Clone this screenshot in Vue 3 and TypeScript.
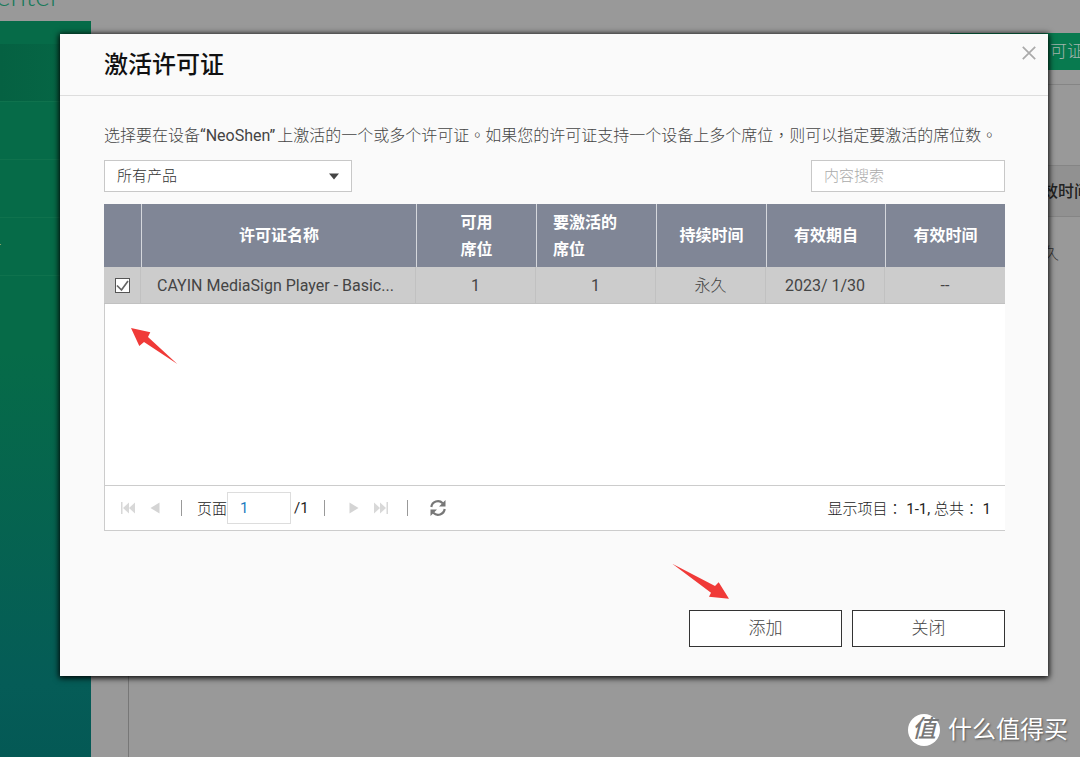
<script setup lang="ts">
import { ref } from 'vue'

interface License {
  id: number
  name: string
  available: string
  activate: string
  duration: string
  from: string
  expires: string
  selected: boolean
}

const licenses = ref<License[]>([
  {
    id: 1,
    name: 'CAYIN MediaSign Player - Basic...',
    available: '1',
    activate: '1',
    duration: '永久',
    from: '2023/ 1/30',
    expires: '--',
    selected: true,
  },
])

const product = ref('all')
const keyword = ref('')
const page = ref('1')
const open = ref(true)
const navItems = ['', '', '', '-']
</script>

<template>
  <div class="page">
    <header class="topbar"><span class="brand">enter</span></header>
    <div class="shell">
      <nav class="sidebar">
        <ul>
          <li v-for="(item, i) in navItems" :key="i" :class="{ active: i === 0 }">{{ item }}</li>
        </ul>
      </nav>
      <main class="content">
        <div class="toolbar"><button class="green" type="button">可证</button></div>
        <section class="panel">
          <div class="panel-head">效时间</div>
          <div class="panel-row">久</div>
        </section>
      </main>
    </div>

    <div v-if="open" class="overlay">
      <div class="dialog" role="dialog" aria-labelledby="dialog-title">
        <div class="dialog-head">
          <h1 id="dialog-title">激活许可证</h1>
          <button class="close" type="button" aria-label="关闭" @click="open = false">
            <svg width="14" height="14" viewBox="0 0 14 14">
              <path d="M.8 .8 13.2 13.2M13.2 .8 .8 13.2" fill="none" stroke="#aaa" stroke-width="1.7" />
            </svg>
          </button>
        </div>

        <div class="dialog-body">
          <p class="intro">
            选择要在设备<span class="device">“NeoShen”</span>上激活的一个或多个许可证<span class="mid">。</span>如果您的许可证支持一个设备上多个席位<span class="mid">，</span>则可以指定要激活的席位数<span class="mid">。</span>
          </p>

          <div class="filters">
            <div class="select-box">
              <select v-model="product" aria-label="产品">
                <option value="all">所有产品</option>
              </select>
              <svg width="10" height="7" viewBox="0 0 10 7"><path d="M0 .5h10L5 6.5z" fill="#444" /></svg>
            </div>
            <input v-model="keyword" class="search" type="text" placeholder="内容搜索" aria-label="内容搜索" />
          </div>

          <div class="grid-box">
            <div class="rows">
              <table>
                <colgroup>
                  <col class="c-check" />
                  <col />
                  <col class="c-wide" />
                  <col class="c-wide" />
                  <col class="c-mid" />
                  <col class="c-from" />
                  <col class="c-wide" />
                </colgroup>
                <thead>
                  <tr>
                    <th></th>
                    <th>许可证名称</th>
                    <th>可用<br />席位</th>
                    <th class="left">要激活的<br />席位</th>
                    <th>持续时间</th>
                    <th>有效期自</th>
                    <th>有效时间</th>
                  </tr>
                </thead>
                <tbody>
                  <tr v-for="row in licenses" :key="row.id">
                    <td><input v-model="row.selected" type="checkbox" :aria-label="row.name" /></td>
                    <td class="left">{{ row.name }}</td>
                    <td>{{ row.available }}</td>
                    <td>{{ row.activate }}</td>
                    <td>{{ row.duration }}</td>
                    <td>{{ row.from }}</td>
                    <td>{{ row.expires }}</td>
                  </tr>
                </tbody>
              </table>
              <svg class="arrow arrow-row" width="48" height="38" viewBox="0 0 48 38">
                <path d="M1 1 20.300 5.300 18 10 47.300 37 14 15 9.300 19z" fill="#f03a38" />
              </svg>
            </div>

            <div class="pager">
              <div class="pager-nav">
                <button type="button" aria-label="第一页" disabled>
                  <svg width="16" height="14" viewBox="0 0 16 14">
                    <path d="M1 1h1.500v12H1zM9 1.500v11L3 7zM15 1.500v11L9 7z" fill="#d8d8d8" />
                  </svg>
                </button>
                <button type="button" aria-label="上一页" disabled>
                  <svg width="16" height="14" viewBox="0 0 16 14"><path d="M12.500 1.500v11L3.500 7z" fill="#d4d4d4" /></svg>
                </button>
                <i class="bar"></i>
                <label class="page-label" for="page-input">页面</label>
                <input id="page-input" v-model="page" class="page-input" type="text" />
                <span class="total">/1</span>
                <i class="bar"></i>
                <button type="button" aria-label="下一页" disabled>
                  <svg width="16" height="14" viewBox="0 0 16 14"><path d="M3.500 1.500v11L12.500 7z" fill="#d4d4d4" /></svg>
                </button>
                <button type="button" aria-label="最后一页" disabled>
                  <svg width="16" height="14" viewBox="0 0 16 14">
                    <path d="M15 1h-1.500v12H15zM7 1.500v11L13 7zM1 1.500v11L7 7z" fill="#d8d8d8" />
                  </svg>
                </button>
                <i class="bar"></i>
                <button class="refresh" type="button" aria-label="刷新">
                  <svg width="18" height="18" viewBox="0 0 18 18">
                    <path d="M2.300 8A6.700 6.700 0 0 1 13.700 4.200M15.700 10A6.700 6.700 0 0 1 4.300 13.800" fill="none" stroke="#777" stroke-width="2.200" />
                    <path d="M16.500 1v6.500H10zM1.500 17v-6.500H8z" fill="#777" />
                  </svg>
                </button>
              </div>
              <div class="summary">显示项目<span class="mid">：</span> <b>1-1,</b> 总共<span class="mid">：</span> <b>1</b></div>
            </div>
          </div>

          <div class="actions">
            <button type="button">添加</button>
            <button type="button" @click="open = false">关闭</button>
            <svg class="arrow arrow-add" width="58" height="36" viewBox="0 0 58 36">
              <path d="M.3 .7 43 23 46.700 19.300 57 35.700 37 33.700 39 29.700z" fill="#f03a38" />
            </svg>
          </div>
        </div>
      </div>
    </div>

    <div class="watermark">
      <span class="seal">值</span>
      <span>什么值得买</span>
    </div>
  </div>
</template>

<style>
body {
  margin: 0;
  background: #999;
}
</style>

<style scoped>
* {
  box-sizing: border-box;
}
.page {
  position: relative;
  display: flex;
  flex-direction: column;
  min-height: 100vh;
  overflow: hidden;
  background: #999;
  color: #444;
  font-family: Roboto, "Noto Sans CJK SC", sans-serif;
  font-size: 16px;
  font-weight: 300;
}
button,
input,
select {
  font-family: inherit;
  font-weight: inherit;
}
button {
  padding: 0;
  border: 0;
  background: none;
}
svg {
  display: block;
}
.mid {
  font-family: "Noto Sans CJK TC", sans-serif;
}

/* Dimmed page behind the dialog */
.topbar {
  display: flex;
  align-items: flex-end;
  height: 21px;
  padding-bottom: 12px;
  overflow: hidden;
}
.brand {
  margin-left: -4px;
  color: #16795a;
  font-family: Lato, sans-serif;
  font-size: 28px;
  font-weight: 300;
  line-height: 28px;
}
.shell {
  display: flex;
  flex: 1;
}
.sidebar {
  flex: none;
  width: 91px;
  padding-top: 23px;
  background: linear-gradient(#066b48, #066b48 45%, #055c57 90%, #045955);
}
.sidebar ul {
  margin: 0;
  padding: 0;
  list-style: none;
}
.sidebar li {
  height: 58px;
  border-bottom: 1px solid #0f724d;
  color: #b5cfc5;
  font-size: 14px;
  line-height: 52px;
  text-indent: -3px;
}
.sidebar .active {
  background: linear-gradient(90deg, #056142, #066846);
}
.content {
  display: flex;
  flex: 1;
  flex-direction: column;
  padding-left: 37px;
}
.toolbar {
  display: flex;
  justify-content: flex-end;
  height: 63px;
  padding-top: 12px;
}
.green {
  width: 130px;
  height: 37px;
  padding: 0 0 5px 100px;
  background: #087a4f;
  color: #a3b5ad;
  font-size: 17px;
  text-align: left;
  white-space: nowrap;
}
.panel {
  flex: 1;
  padding-top: 80px;
  border-top: 1px solid #858585;
  border-left: 1px solid #777;
  text-align: right;
}
.panel-head {
  height: 52px;
  margin-right: -11px;
  padding-right: 1px;
  border: solid #858585;
  border-width: 1px 0;
  background: #919191;
  color: #222;
  font-weight: 500;
  line-height: 52px;
}
.panel-row {
  padding-right: 21px;
  color: #333;
  line-height: 74px;
}

/* Dialog */
.overlay {
  position: absolute;
  inset: 0;
  padding: 34px 32px 0 60px;
}
.dialog {
  background: #fafafa;
  box-shadow: 0 1px 6px 1px #000;
}
.dialog-head {
  display: flex;
  align-items: flex-start;
  justify-content: space-between;
  height: 62px;
  padding: 12px 12px 0 44px;
  border-bottom: 1px solid #ddd;
}
h1 {
  margin: 0;
  color: #111;
  font-size: 24px;
  font-weight: 500;
  line-height: 38px;
}
.dialog-body {
  padding: 26px 43px 29px 44px;
}
.intro {
  margin: 0 0 12px;
  line-height: 25px;
  white-space: nowrap;
}
.device {
  margin-right: 2px;
  font-weight: 400;
}
.filters {
  display: flex;
  justify-content: space-between;
  margin-bottom: 12px;
}
.select-box {
  display: flex;
  align-items: center;
  width: 248px;
  height: 32px;
  border: 1px solid #c8c8c8;
  background: #fff;
}
.select-box select {
  flex: 1;
  height: 30px;
  margin-right: -24px;
  padding: 0 24px 0 12px;
  appearance: none;
  border: 0;
  background: transparent;
  color: #333;
  font-size: 15px;
}
.select-box svg {
  margin-right: 12px;
  pointer-events: none;
}
.search {
  width: 194px;
  height: 32px;
  padding: 0 12px;
  border: 1px solid #c8c8c8;
  background: #fff;
  font-size: 15px;
}
.search::placeholder {
  color: #aaa;
}
.grid-box {
  border-bottom: 1px solid #ccc;
  background: #fff;
  box-shadow: inset 1px 0 #ccc;
}
.rows {
  position: relative;
  min-height: 281px;
}
table {
  width: 100%;
  border-spacing: 0;
  table-layout: fixed;
}
.c-check {
  width: 37px;
}
.c-wide {
  width: 120px;
}
.c-mid {
  width: 110px;
}
.c-from {
  width: 119px;
}
th {
  height: 63px;
  padding: 0;
  background: #808696;
  color: #fff;
  font-weight: 700;
  line-height: 27px;
}
th + th {
  border-left: 1px solid #d5d7dc;
}
th.left,
td.left {
  padding-left: 16px;
  text-align: left;
}
td {
  height: 37px;
  padding: 0;
  border-right: 1px solid #c1c1c1;
  border-bottom: 1px solid #c1c1c1;
  background: #ccc;
  font-weight: 400;
  line-height: 24px;
  text-align: center;
  white-space: nowrap;
}
td + td {
  padding-top: 2px;
}
td:nth-child(5) {
  font-weight: 300;
}
td:last-child {
  border-right: 0;
}
td input {
  display: block;
  width: 15px;
  height: 15px;
  margin: 0 auto;
  appearance: none;
  border: 1px solid #555;
  background: #fff;
}
td input:checked {
  background: #fff url("data:image/svg+xml,%3Csvg xmlns='http://www.w3.org/2000/svg' viewBox='0 0 13 13'%3E%3Cpath d='M1 6.500 5.500 11 12 2' fill='none' stroke='%23666' stroke-width='1.700'/%3E%3C/svg%3E");
}
.arrow {
  position: absolute;
  pointer-events: none;
}
.arrow-row {
  top: 123px;
  left: 26px;
}
.pager {
  display: flex;
  align-items: center;
  justify-content: space-between;
  height: 45px;
  padding: 0 14px 0 16px;
  border-top: 1px solid #ccc;
  color: #222;
  font-size: 15px;
}
.pager-nav {
  display: flex;
  align-items: center;
}
.pager-nav button + button {
  margin-left: 11px;
}
.bar {
  width: 1px;
  height: 16px;
  margin: 0 21px 0 18px;
  background: #999;
}
.page-label {
  margin-left: -6px;
  padding-bottom: 2px;
}
.page-input {
  width: 64px;
  height: 32px;
  padding: 0 12px;
  border: 1px solid #ddd;
  background: #fff;
  color: #1a7bc0;
  font-size: 15px;
  font-weight: 400;
}
.total {
  width: 12px;
  margin-left: 3px;
  font-weight: 400;
}
.summary {
  padding-bottom: 2px;
  white-space: nowrap;
}
.summary b {
  font-weight: 400;
}
.actions {
  position: relative;
  display: flex;
  gap: 10px;
  justify-content: flex-end;
  margin-top: 79px;
}
.actions button {
  width: 153px;
  height: 37px;
  padding-bottom: 4px;
  border: 1px solid #333;
  background: #fff;
  color: #444;
  font-size: 17px;
}
.arrow-add {
  top: -47px;
  right: 275px;
}

.watermark {
  position: absolute;
  right: 12px;
  bottom: 9px;
  display: flex;
  gap: 8px;
  align-items: center;
  color: #fff;
  font-size: 24px;
  font-weight: 400;
  line-height: 36px;
  text-shadow: 1px 1px 2px #555;
}
.seal {
  width: 32px;
  height: 32px;
  border-radius: 50%;
  background: #fff;
  color: #777;
  font-size: 24px;
  font-style: italic;
  font-weight: 500;
  line-height: 30px;
  text-align: center;
  text-shadow: none;
}
</style>
